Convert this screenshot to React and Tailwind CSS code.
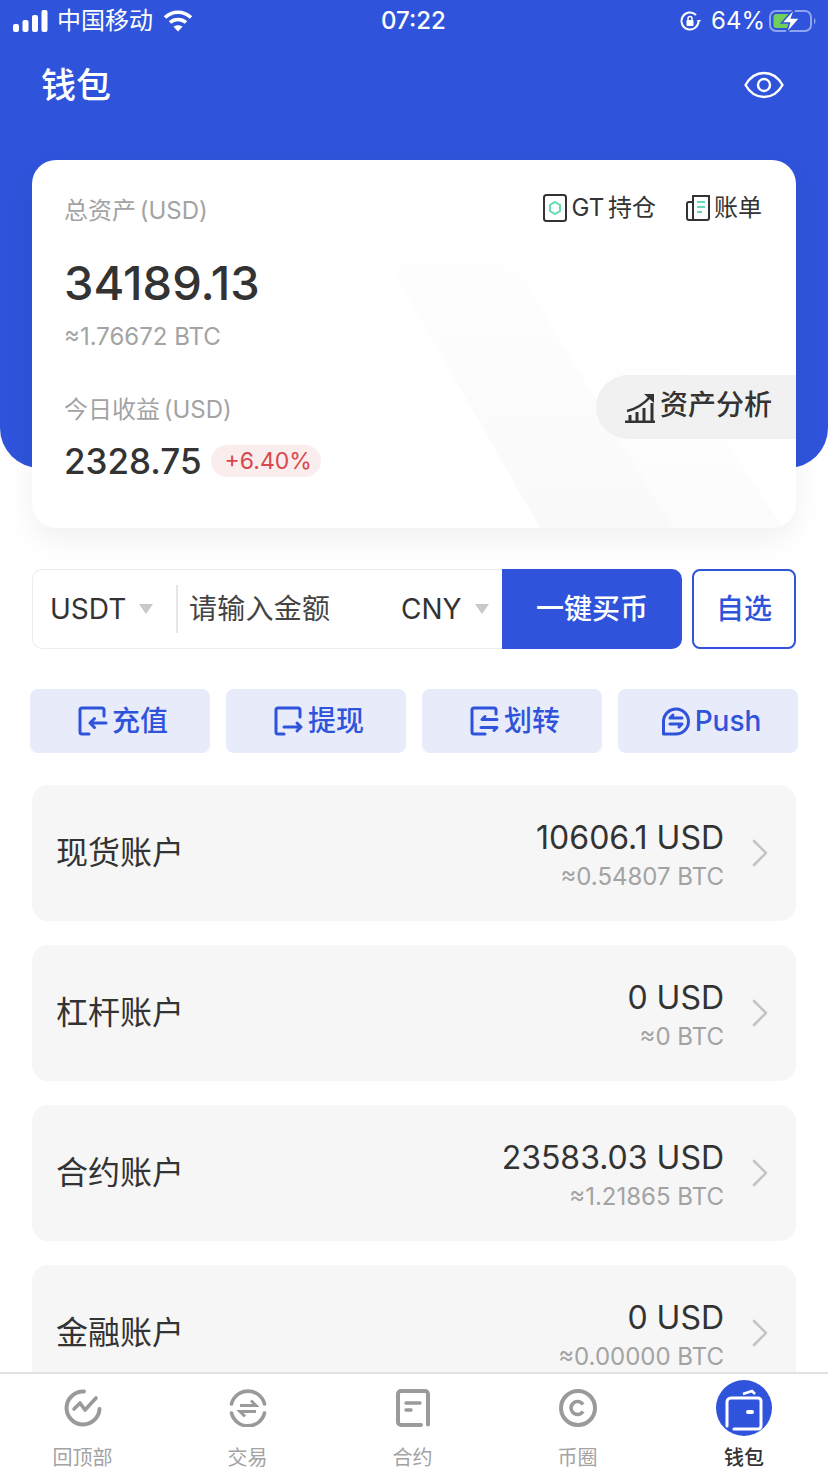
const font = { fontFamily: 'Inter, "Noto Sans CJK SC", sans-serif' };

const accounts = [
  { name: '现货账户', usd: '10606.1 USD', btc: '≈0.54807 BTC' },
  { name: '杠杆账户', usd: '0 USD', btc: '≈0 BTC' },
  { name: '合约账户', usd: '23583.03 USD', btc: '≈1.21865 BTC' },
  { name: '金融账户', usd: '0 USD', btc: '≈0.00000 BTC' },
];

function StatusBar() {
  return (
    <div className="h-[42px] flex items-center justify-between pl-[13px] pr-[11px] text-white text-[24px] relative">
      <div className="flex items-center gap-[9px]">
        <svg width="35" height="22" viewBox="0 0 35 22" fill="#fff">
          <rect x="0" y="14" width="6" height="8" rx="2" />
          <rect x="9.5" y="10" width="6" height="12" rx="2" />
          <rect x="19" y="5" width="6" height="17" rx="2" />
          <rect x="28.5" y="0" width="6" height="22" rx="2" />
        </svg>
        <span className="text-[24px] leading-none">中国移动</span>
        <svg width="30" height="22" viewBox="0 0 30 22" fill="none" stroke="#fff" strokeWidth="3.6" className="ml-[1px]">
          <path d="M2 7.5C9.5 0.5 20.5 0.5 28 7.5" />
          <path d="M7 12.5C11.5 8.5 18.5 8.5 23 12.5" />
          <path d="M15 21.5L10.5 16.8C13 14.8 17 14.8 19.5 16.8Z" fill="#fff" stroke="none" />
        </svg>
      </div>
      <span className="absolute left-[381px] top-[7px] text-[24px] leading-[28px] font-medium">07:22</span>
      <div className="flex items-center">
        <svg width="22" height="22" viewBox="0 0 22 22" fill="none" stroke="#fff" strokeWidth="2" className="mr-[10px]">
          <path d="M19.5 11A8.5 8.5 0 1 1 17 5" />
          <path d="M20 12l-2.5-2h5z" fill="#fff" stroke="none" />
          <rect x="7.5" y="10" width="7" height="6" rx="1" fill="#fff" stroke="none" />
          <path d="M9 10V8.5a2 2 0 0 1 4 0V10" strokeWidth="1.5" />
        </svg>
        <span className="text-[24px] leading-none">64%</span>
        <svg width="48" height="26" viewBox="0 0 48 26" fill="none" className="ml-[4px]">
          <rect x="1" y="3" width="41" height="20" rx="6" stroke="#8fa4ee" strokeWidth="2" />
          <path d="M4.500 9a3 3 0 0 1 3-3H22v14H7.500a3 3 0 0 1-3-3z" fill="#6fd05b" />
          <path d="M45 10c2 1 2 5 0 6z" fill="#8fa4ee" />
          <path d="M26 0L12.500 15h8L17 26l14-16h-8.500z" fill="#fff" stroke="#2f54db" strokeWidth="1.500" />
        </svg>
      </div>
    </div>
  );
}

function Header() {
  return (
    <div className="h-[468px] bg-[#2f54db] rounded-b-[40px]">
      <StatusBar />
      <div className="flex items-center justify-between pl-[41px] pr-[44px] pt-[18px]">
        <span className="text-white text-[35px] leading-[50px] font-medium">钱包</span>
        <svg width="40" height="28" viewBox="0 0 40 28" fill="none" stroke="#fff" strokeWidth="2.4">
          <path d="M1.5 14C6 6 12.5 2 20 2s14 4 18.5 12C34 22 27.5 26 20 26S6 22 1.5 14Z" />
          <circle cx="20" cy="14" r="6" />
        </svg>
      </div>
    </div>
  );
}

function AssetCard() {
  return (
    <div className="relative mx-[32px] -mt-[308px] h-[368px] bg-white rounded-[24px] overflow-hidden shadow-[0_12px_30px_rgba(0,0,0,0.06)]">
      <svg className="absolute inset-0" width="764" height="368" viewBox="0 0 764 368">
        <defs>
          <linearGradient id="fade" x1="0" y1="0" x2="0" y2="1">
            <stop offset="0" stopColor="#fbfbfb" stopOpacity="0" />
            <stop offset="0.45" stopColor="#fbfbfb" stopOpacity="0.7" />
            <stop offset="1" stopColor="#f9f9f9" />
          </linearGradient>
        </defs>
        <path d="M355 100L450 50 641 368H508Z" fill="url(#fade)" />
        <path d="M641 368H751L610 150 565 240Z" fill="url(#fade)" opacity="0.6" />
      </svg>

      <div className="relative flex justify-between pl-[32px] pr-[34px] pt-[31px]">
        <span className="text-[24px] leading-[40px] text-[#a3a3a3] [word-spacing:-3px]">总资产 (USD)</span>
        <div className="flex items-center gap-[30px] h-[34px] text-[24px] text-[#333]">
          <div className="flex items-center gap-[5px]">
            <svg width="24" height="28" viewBox="0 0 24 28" fill="none">
              <rect x="1" y="1" width="22" height="26" rx="2.5" stroke="#333" strokeWidth="2" />
              <path d="M12 8l5 3v6l-5 3-5-3v-6z" stroke="#62dcae" strokeWidth="2" />
            </svg>
            <span className="[word-spacing:-3px]">GT 持仓</span>
          </div>
          <div className="flex items-center gap-[4px]">
            <svg width="24" height="26" viewBox="0 0 24 26" fill="none">
              <path d="M7 7H3a2 2 0 0 0-2 2v14a2 2 0 0 0 2 2h18a2 2 0 0 0 2-2V1H7v24" stroke="#333" strokeWidth="2" />
              <path d="M11 7h8M11 12h8M11 17h5" stroke="#62dcae" strokeWidth="2" />
            </svg>
            <span>账单</span>
          </div>
        </div>
      </div>

      <div className="relative pl-[32px] mt-[24px] text-[47px] leading-[56px] font-medium text-[#333]">34189.13</div>
      <div className="relative pl-[32px] mt-[10px] text-[24px] leading-[32px] text-[#a3a3a3]">≈1.76672 BTC</div>
      <div className="relative pl-[32px] mt-[41px] text-[24px] leading-[32px] text-[#a3a3a3] [word-spacing:-3px]">今日收益 (USD)</div>
      <div className="relative pl-[32px] mt-[13px] flex items-center gap-[9px]">
        <span className="text-[35px] leading-[44px] font-medium text-[#333]">2328.75</span>
        <span className="h-[32px] pl-[14px] pr-[9px] rounded-[16px] bg-[#f9eded] text-[#d8474d] text-[23px] leading-[32px]">+6.40%</span>
      </div>

      <div className="absolute right-0 top-[215px] w-[200px] h-[64px] bg-[#f1f1f1] rounded-l-[32px] flex items-center pl-[28px] gap-[4px] text-[#333] text-[28px]">
        <svg width="32" height="30" viewBox="0 0 32 30" fill="none" stroke="#333" strokeWidth="2.6" className="mt-[2px]">
          <path d="M1 29h30" strokeWidth="3" />
          <path d="M3 18C12 16 20 11 27 3" />
          <path d="M20 1h10v9z" fill="#333" stroke="none" />
          <path d="M6 22v6M13 19v9M20 15v13M28 10v18" strokeWidth="3" />
        </svg>
        <span className="-mt-[4px] font-medium">资产分析</span>
      </div>
    </div>
  );
}

function Caret() {
  return <span className="w-0 h-0 border-x-[7px] border-x-transparent border-t-[10px] border-t-[#c9c9c9]" />;
}

function BuyRow() {
  return (
    <div className="mx-[32px] mt-[41px] h-[80px] flex text-[28px]">
      <div className="w-[470px] flex items-center border border-r-0 border-[#ececec] rounded-l-[10px] text-[#333]">
        <div className="w-[143px] flex items-center pl-[17px] gap-[13px]">
          <span>USDT</span>
          <Caret />
        </div>
        <div className="w-[2px] h-[48px] bg-[#e6e6e6]" />
        <span className="pl-[11px] w-[223px] text-[#444] tracking-[0.25px]">请输入金额</span>
        <div className="flex items-center gap-[13px]">
          <span>CNY</span>
          <Caret />
        </div>
      </div>
      <div className="w-[180px] bg-[#2f54db] rounded-r-[10px] flex items-center justify-center text-white font-medium">一键买币</div>
      <div className="ml-[10px] w-[104px] border-2 border-[#2f54db] rounded-[8px] flex items-center justify-center text-[#2f54db] font-medium">自选</div>
    </div>
  );
}

function ActionButton({ label, children }) {
  return (
    <div className="w-[180px] h-[64px] pl-[6px] bg-[#e8ecfa] rounded-[8px] flex items-center justify-center gap-[4px] text-[#2f54db] text-[28px] font-medium">
      <svg width="30" height="30" viewBox="0 0 30 30" fill="none" stroke="#2f54db" strokeWidth="3" strokeLinecap="round" strokeLinejoin="round">
        {children}
      </svg>
      <span>{label}</span>
    </div>
  );
}

function ActionRow() {
  return (
    <div className="mx-[30px] mt-[40px] flex gap-[16px]">
      <ActionButton label="充值">
        <path d="M26 10V4a2 2 0 0 0-2-2H4a2 2 0 0 0-2 2v22a2 2 0 0 0 2 2h7" />
        <path d="M28 17H12M16.500 12.500L12 17l4.500 4.500" />
      </ActionButton>
      <ActionButton label="提现">
        <path d="M26 11V4a2 2 0 0 0-2-2H4a2 2 0 0 0-2 2v22a2 2 0 0 0 2 2h6" />
        <path d="M10 21h17M23 17l4 4-4 4" />
      </ActionButton>
      <ActionButton label="划转">
        <path d="M26 8V4a2 2 0 0 0-2-2H4a2 2 0 0 0-2 2v22a2 2 0 0 0 2 2h11" />
        <path d="M27 13.500H12l3-3M11 21.500h16l-3 3" />
      </ActionButton>
      <ActionButton label="Push">
        <path d="M2.500 28V15a12.500 12.500 0 1 1 12.500 13z" />
        <path d="M21 12H9l3-3M9 18h12l-3 3" />
      </ActionButton>
    </div>
  );
}

function AccountRow({ name, usd, btc }) {
  return (
    <div className="h-[136px] shrink-0 bg-[#f6f6f6] rounded-[16px] flex items-center pl-[24px] pr-[28px]">
      <span className="flex-1 text-[32px] text-[#333]">{name}</span>
      <div className="text-right mr-[28px]">
        <div className="mt-[7px] text-[32px] leading-[40px] text-[#333]">{usd}</div>
        <div className="mt-[1px] text-[24px] leading-[36px] text-[#a3a3a3]">{btc}</div>
      </div>
      <svg width="16" height="28" viewBox="0 0 16 28" fill="none" stroke="#c4c4c4" strokeWidth="2.600" strokeLinecap="round" strokeLinejoin="round">
        <path d="M2 2l12 12L2 26" />
      </svg>
    </div>
  );
}

function Tab({ label, active, className, children }) {
  return (
    <div className={`${className} flex flex-col items-center`}>
      <div className="h-[58px] flex items-center justify-center">{children}</div>
      <span className={active ? 'mt-[7px] text-[20px] leading-[28px] font-medium text-[#333]' : 'mt-[7px] text-[20px] leading-[28px] text-[#a3a3a3]'}>{label}</span>
    </div>
  );
}

function BottomNav() {
  return (
    <div className="h-[100px] shrink-0 bg-white border-t-2 border-[#e2e2e2] flex pt-[5px]">
      <Tab label="回顶部" className="w-[165px]">
        <svg width="38" height="38" viewBox="0 0 38 38" fill="none" stroke="#9a9a9a" strokeWidth="4" strokeLinecap="round">
          <path d="M20 2.500A16.500 16.500 0 1 0 35.500 20" />
          <path d="M10 20l6-6 5 7 11-12" strokeWidth="3.600" strokeLinejoin="round" />
        </svg>
      </Tab>
      <Tab label="交易" className="w-[165px]">
        <svg width="38" height="38" viewBox="0 0 38 38" fill="none" stroke="#9a9a9a" strokeWidth="3.600">
          <path d="M2.500 15A17 17 0 0 1 35.500 15M35.500 24A17 17 0 0 1 2.500 24" strokeLinecap="round" />
          <path d="M11 16.500h16l-5-5M27 22.500H11l5 5" strokeWidth="3" />
        </svg>
      </Tab>
      <Tab label="合约" className="w-[165px]">
        <svg width="34" height="38" viewBox="0 0 34 38" fill="none" stroke="#9a9a9a" strokeWidth="4" strokeLinecap="round">
          <path d="M32 35.500V5a3 3 0 0 0-3-3H5a3 3 0 0 0-3 3v28a3 3 0 0 0 3 3h20" />
          <path d="M10 14h14M10 21h5" strokeWidth="3.400" />
        </svg>
      </Tab>
      <Tab label="币圈" className="w-[165px]">
        <svg width="38" height="38" viewBox="0 0 38 38" fill="none" stroke="#9a9a9a" strokeWidth="4">
          <circle cx="19" cy="19" r="17" />
          <path d="M24 15.500a6.500 6.500 0 1 0 0 7" strokeWidth="3.600" />
        </svg>
      </Tab>
      <Tab label="钱包" active className="w-[168px]">
        <div className="w-[56px] h-[56px] rounded-full bg-[#2f54db]">
          <svg width="56" height="56" viewBox="0 0 56 56" fill="none" stroke="#fff" strokeWidth="3">
            <path d="M11 46V22a4 4 0 0 1 4-4h27a3 3 0 0 1 3 3v25a3 3 0 0 1-3 3H18" strokeLinecap="round" />
            <path d="M27 14l9-3 3 3" strokeWidth="2.500" />
            <rect x="30" y="30" width="8" height="4" rx="2" fill="#fff" stroke="none" />
          </svg>
        </div>
      </Tab>
    </div>
  );
}

export default function App() {
  return (
    <div className="w-[828px] h-[1472px] bg-white overflow-hidden flex flex-col" style={font}>
      <div className="flex-1 min-h-0 overflow-hidden">
        <Header />
        <AssetCard />
        <BuyRow />
        <ActionRow />
        <div className="mx-[32px] mt-[32px] flex flex-col gap-[24px]">
          {accounts.map((a) => (
            <AccountRow key={a.name} {...a} />
          ))}
        </div>
      </div>
      <BottomNav />
    </div>
  );
}
